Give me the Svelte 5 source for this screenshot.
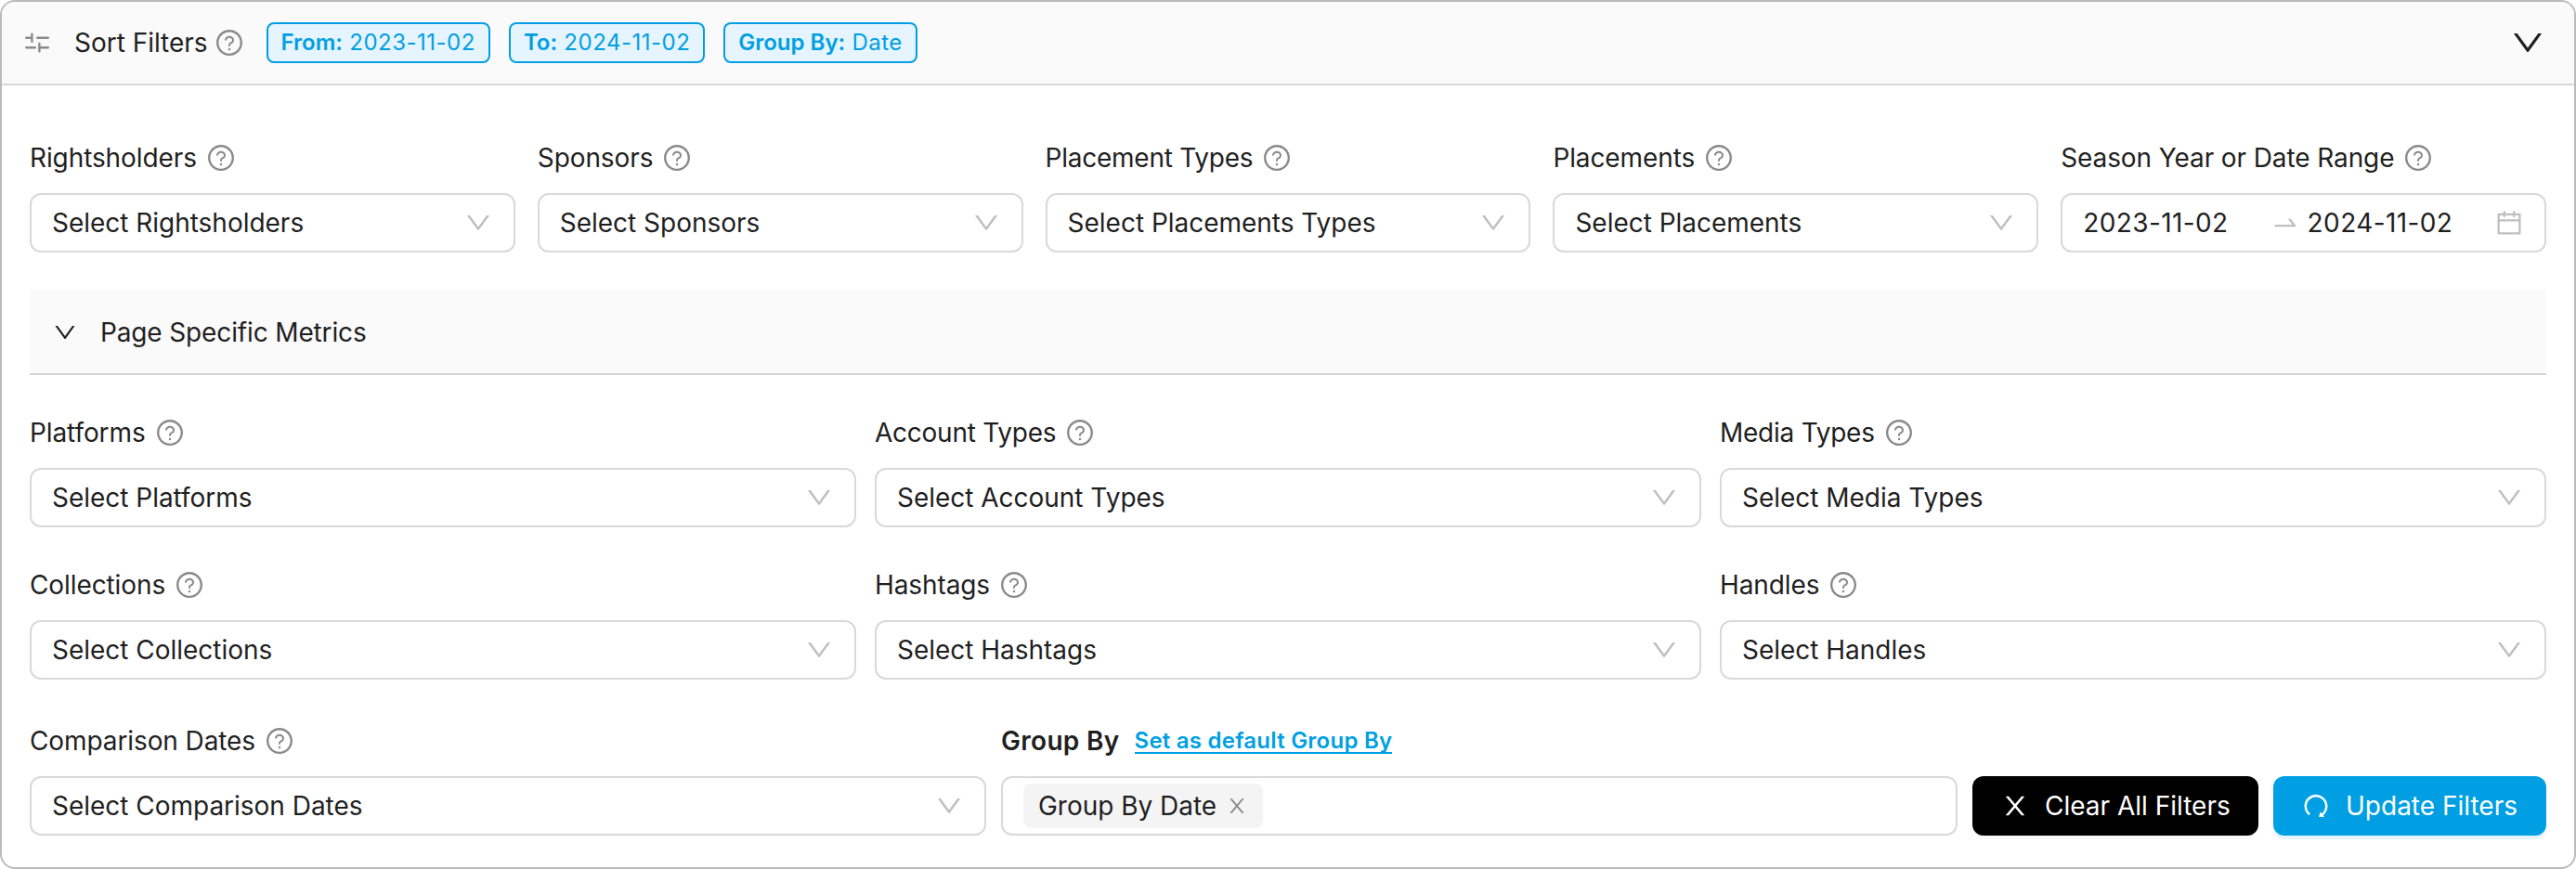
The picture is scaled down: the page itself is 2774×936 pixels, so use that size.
<script>
  const icons = {
    help: 'M512 64C264.6 64 64 264.6 64 512s200.6 448 448 448 448-200.6 448-448S759.4 64 512 64zm0 820c-205.4 0-372-166.6-372-372s166.6-372 372-372 372 166.6 372 372-166.6 372-372 372zM623.6 316.7C593.6 290.4 554 276 512 276s-81.6 14.5-111.6 40.7C369.2 344 352 380.7 352 420v7.6c0 4.4 3.6 8 8 8h48c4.4 0 8-3.6 8-8V420c0-44.1 43.1-80 96-80s96 35.9 96 80c0 31.1-22 59.6-56.1 72.7-21.2 8.1-39.2 22.3-52.1 40.9-13.1 19-19.9 41.8-19.9 64.9V620c0 4.4 3.6 8 8 8h48c4.4 0 8-3.6 8-8v-22.7a48.3 48.3 0 0130.9-44.8c59-22.7 97.1-74.7 97.1-132.5.1-39.3-17.1-76-48.3-103.3zM472 732a40 40 0 1080 0 40 40 0 10-80 0z',
    down: 'M884 256h-75c-5.1 0-9.9 2.5-12.9 6.6L512 654.2 227.9 262.6c-3-4.1-7.8-6.6-12.9-6.6h-75c-6.5 0-10.3 7.4-6.5 12.7l352.6 486.1c12.8 17.6 39 17.6 51.7 0l352.6-486.1c3.9-5.3.1-12.7-6.4-12.7z',
    arrow: 'M873.1 596.2l-164-208A32 32 0 00684 376h-64.8c-6.7 0-10.4 7.7-6.3 13l144.3 183H152c-4.4 0-8 3.6-8 8v60c0 4.4 3.6 8 8 8h695.9c26.8 0 41.7-30.8 25.2-51.8z',
    calendar: 'M880 184H712v-64c0-4.4-3.6-8-8-8h-56c-4.4 0-8 3.6-8 8v64H384v-64c0-4.4-3.6-8-8-8h-56c-4.4 0-8 3.6-8 8v64H144c-17.7 0-32 14.3-32 32v664c0 17.7 14.3 32 32 32h736c17.7 0 32-14.3 32-32V216c0-17.7-14.3-32-32-32zm-40 656H184V460h656v380zM184 392V256h128v48c0 4.4 3.6 8 8 8h56c4.4 0 8-3.6 8-8v-48h256v48c0 4.4 3.6 8 8 8h56c4.4 0 8-3.6 8-8v-48h128v136H184z',
    close: 'M563.8 512l262.5-312.9c4.4-5.2.7-13.1-6.1-13.1h-79.8c-4.7 0-9.2 2.1-12.3 5.7L511.6 449.8 295.1 191.7c-3-3.6-7.5-5.7-12.3-5.7H203c-6.8 0-10.5 7.9-6.1 13.1L459.4 512 196.9 824.9A7.95 7.95 0 00203 838h79.8c4.7 0 9.2-2.1 12.3-5.7l216.5-258.1 216.5 258.1c3 3.6 7.5 5.7 12.3 5.7h79.8c6.8 0 10.5-7.9 6.1-13.1L563.8 512z',
    redo: 'M758.2 839.1C851.8 765.9 912 651.9 912 523.9 912 303 733.5 124.3 512.6 124 291.4 123.7 112 302.8 112 523.9c0 125.2 57.5 236.9 147.6 310.2 3.5 2.8 8.6 2.2 11.4-1.3l39.4-50.5c2.7-3.4 2.1-8.3-1.2-11.1-8.1-6.6-15.9-13.7-23.4-21.2a318.64 318.64 0 01-68.6-101.7C200.4 609 192 567.1 192 523.9s8.4-85.1 25.1-124.5c16.1-38.1 39.2-72.3 68.6-101.7 29.4-29.4 63.6-52.5 101.7-68.6C426.9 212.4 468.8 204 512 204s85.1 8.4 124.5 25.1c38.1 16.1 72.3 39.2 101.7 68.6 29.4 29.4 52.5 63.6 68.6 101.7 16.7 39.4 25.1 81.3 25.1 124.5s-8.4 85.1-25.1 124.5a318.64 318.64 0 01-68.6 101.7c-9.3 9.3-19.1 18-29.3 26L668.2 724a8 8 0 00-14.1 3l-39.6 162.2c-1.2 5 2.6 9.9 7.7 9.9l167 .8c6.7 0 10.5-7.7 6.3-12.9l-37.3-47.9z',
  };
  const tags = [
    ['From:', '2023-11-02'],
    ['To:', '2024-11-02'],
    ['Group By:', 'Date'],
  ];
  const primary = [
    ['Rightsholders', 'Select Rightsholders'],
    ['Sponsors', 'Select Sponsors'],
    ['Placement Types', 'Select Placements Types'],
    ['Placements', 'Select Placements'],
  ];
  const metrics = [
    [
      ['Platforms', 'Select Platforms'],
      ['Account Types', 'Select Account Types'],
      ['Media Types', 'Select Media Types'],
    ],
    [
      ['Collections', 'Select Collections'],
      ['Hashtags', 'Select Hashtags'],
      ['Handles', 'Select Handles'],
    ],
  ];
</script>

{#snippet icon(name, cls)}
  <svg class="icon {cls}" viewBox="0 0 1024 1024" aria-hidden="true"><path d={icons[name]} /></svg>
{/snippet}

{#snippet select(label, text)}
  <div class="field">
    <div class="label"><span class:tight={label.endsWith('Types')}>{label}</span>{@render icon('help', 'help')}</div>
    <div class="box"><span>{text}</span>{@render icon('down', 'caret')}</div>
  </div>
{/snippet}

<div class="panel">
  <header>
    <svg class="sliders" viewBox="0 0 26 22" aria-hidden="true">
      <path d="M1.3 5.7H7.4M7.4 1.6V9.8M13.3 5.7H24.8M1.3 16.3H10.8M15.4 12V20.2M15.4 16.3H24.8" />
    </svg>
    <span class="title">Sort Filters</span>
    {@render icon('help', 'help')}
    <div class="tags">
      {#each tags as [key, value]}
        <span class="tag"><b>{key}</b> {value}</span>
      {/each}
    </div>
    {@render icon('down', 'toggle')}
  </header>

  <main>
    <section class="row five">
      {#each primary as [label, text]}
        {@render select(label, text)}
      {/each}
      <div class="field">
        <div class="label"><span>Season Year or Date Range</span>{@render icon('help', 'help')}</div>
        <div class="box range">
          <span class="date">2023-11-02</span>
          {@render icon('arrow', 'arrow')}
          <span class="date">2024-11-02</span>
          {@render icon('calendar', 'calendar')}
        </div>
      </div>
    </section>

    <div class="divider">{@render icon('down', 'fold')}<span>Page Specific Metrics</span></div>

    {#each metrics as group}
      <section class="row three">
        {#each group as [label, text]}
          {@render select(label, text)}
        {/each}
      </section>
    {/each}

    <section class="row last">
      {@render select('Comparison Dates', 'Select Comparison Dates')}
      <div class="field">
        <div class="label"><strong>Group By</strong><a href="#default">Set as default Group By</a></div>
        <div class="box group">
          <span class="chip"><span>Group By Date</span>{@render icon('close', 'remove')}</span>
        </div>
      </div>
      <button class="clear">{@render icon('close', 'act')}<span>Clear All Filters</span></button>
      <button class="update">{@render icon('redo', 'act')}<span>Update Filters</span></button>
    </section>
  </main>
</div>

<style>
  :global(body) { background: #fff; }
  .panel, .panel * { box-sizing: border-box; }
  .panel {
    width: 2774px;
    height: 936px;
    border: 2px solid #bbb;
    border-radius: 16px;
    background: #fff;
    overflow: hidden;
    color: #1f1f1f;
    font: 400 28px/44px Inter, sans-serif;
    letter-spacing: -0.02px;
    white-space: nowrap;
  }
  .icon { display: block; flex: none; fill: currentColor; }
  .help { width: 32px; height: 32px; color: #8a8a8a; }
  header {
    display: flex;
    align-items: center;
    height: 90px;
    padding: 0 30px 0 25px;
    background: #fafafa;
    border-bottom: 2px solid #d9d9d9;
  }
  .sliders { width: 26px; height: 22px; margin-right: 27px; fill: none; stroke: #8a8a8a; stroke-width: 2.4; stroke-linecap: round; }
  header .help { margin-left: 7px; }
  .tags { display: flex; gap: 20px; margin-left: 24px; }
  .tag {
    height: 44px;
    padding: 0 14px;
    border: 2px solid #009fe3;
    border-radius: 8px;
    background: #e6f4ff;
    color: #009fe3;
    font-size: 24px;
    line-height: 40px;
    letter-spacing: 0.5px;
  }
  .tag b { font-weight: 600; letter-spacing: 0; }
  .toggle { width: 40px; height: 40px; margin-left: auto; }
  main { padding: 56px 30px 0; }
  .row { display: grid; }
  .five { grid-template-columns: repeat(5, 1fr); column-gap: 24px; }
  .three { grid-template-columns: repeat(3, 1fr); column-gap: 20px; margin-bottom: 40px; }
  .last { grid-template-columns: 1fr 1fr 308px 294px; column-gap: 16px; align-items: end; margin-top: 44px; }
  .label { display: flex; align-items: center; height: 44px; margin-bottom: 16px; letter-spacing: -0.1px; }
  .label .tight { letter-spacing: -0.25px; }
  .label .help { margin-left: 10px; }
  .box {
    display: flex;
    align-items: center;
    justify-content: space-between;
    height: 64px;
    padding: 0 22px;
    border: 2px solid #d9d9d9;
    border-radius: 12px;
  }
  .caret { width: 32px; height: 32px; color: #bfbfbf; }
  .date { flex: 1; letter-spacing: 0.4px; }
  .range .arrow { width: 32px; height: 32px; margin-right: 8px; color: #bfbfbf; }
  .range .calendar { width: 32px; height: 32px; color: #bfbfbf; }
  .divider {
    display: flex;
    align-items: center;
    height: 92px;
    margin: 40px 0;
    padding: 2px 0 0 24px;
    background: #fafafa;
    border-bottom: 2px solid #d4d4d4;
    letter-spacing: -0.14px;
  }
  .fold { width: 28px; height: 28px; margin-right: 24px; }
  strong { font-weight: 600; letter-spacing: 0.3px; }
  a {
    height: 28px;
    margin-left: 16px;
    color: #009fe3;
    font-size: 24px;
    font-weight: 600;
    line-height: 28px;
    letter-spacing: 0.24px;
    text-decoration: none;
    border-bottom: 2px solid #009fe3;
  }
  .chip {
    display: flex;
    align-items: center;
    justify-content: space-between;
    width: 258px;
    height: 48px;
    padding: 0 16px;
    border-radius: 8px;
    background: #f4f4f4;
  }
  .remove { width: 24px; height: 24px; color: #8a8a8a; }
  button {
    display: flex;
    align-items: center;
    height: 64px;
    padding: 0 30px;
    border: 0;
    border-radius: 12px;
    color: #fff;
    font: inherit;
    letter-spacing: 0;
  }
  .act { width: 32px; height: 32px; margin-right: 16px; }
  .clear { background: #000; box-shadow: 0 4px 0 rgba(0, 0, 0, 0.02); }
  .update { background: #009fe3; box-shadow: 0 4px 0 #e6f4ff; }
</style>
